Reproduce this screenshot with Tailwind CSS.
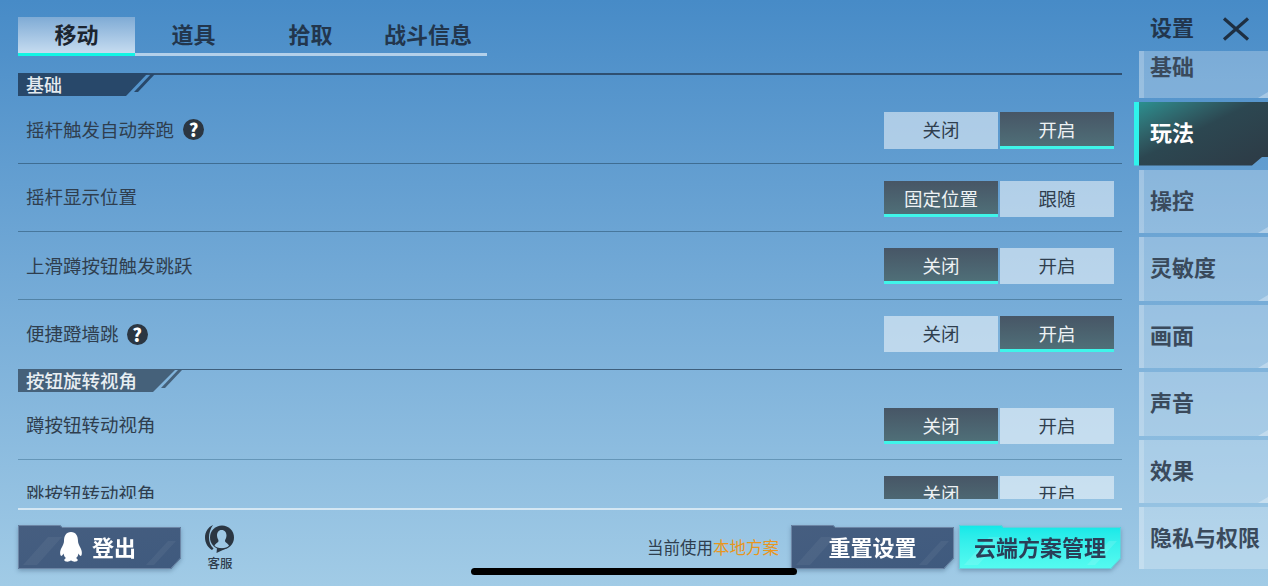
<!DOCTYPE html>
<html lang="zh">
<head>
    <meta charset="UTF-8">
    <title>设置</title>
    <script src="https://cdn.jsdelivr.net/npm/@tailwindcss/browser@4"></script>
</head>
<body class="overflow-hidden">
<div class="relative w-[1268px] h-[586px] overflow-hidden flex bg-gradient-to-b from-[#478bc7] to-[#a1cbe6] text-[#2f3e4e] font-['Noto_Sans_CJK_SC','Noto_Sans',sans-serif]">

    <!-- main column -->
    <div class="w-[1122px] pl-[18px] pt-[17px] flex flex-col">
        <!-- tabs -->
        <div class="w-[469px] h-[39px] flex border-b-[3px] border-[#b3d0ea] text-[22px] leading-[32px] font-bold text-[#22364d] text-center">
            <div class="w-[117px] h-[39px] border-b-[3px] border-[#12f5e4] bg-gradient-to-b from-[#7fabd5] to-[#c6dcf0] text-[#1c2530]">移动</div>
            <div class="w-[117px]">道具</div>
            <div class="w-[117px]">拾取</div>
            <div class="w-[118px]">战斗信息</div>
        </div>

        <!-- scrolling list -->
        <div class="mt-[17px] h-[426px] overflow-hidden">
            <div class="relative h-[23px] border-t-2 border-[#2f4f70]">
                <div class="w-[130px] h-[23px] -mt-[2px] pl-[8px] text-[18px] leading-[23px] font-medium text-[#e4ebf0] bg-[#28486a] [clip-path:polygon(0_0,100%_0,108px_100%,0_100%)]">基础</div>
                <svg class="absolute left-[115px] -top-[2px]" width="24" height="22" viewBox="0 0 24 22"><path d="M18 1 L22 1 L5 19 L1 19Z" fill="#28486a"/></svg>
            </div>

            <div class="h-[68px] px-[8px] flex items-center justify-between border-b border-[#3f6d92]">
                <div class="flex items-center gap-[9px] text-[18.5px]">摇杆触发自动奔跑<span class="w-[21px] h-[21px] rounded-full bg-[#2b3642] text-white text-[18px] leading-[21px] font-black text-center">?</span></div>
                <div class="mt-[2px] flex gap-[2px] text-[18.5px] leading-[34px] text-center">
                    <div class="w-[114px] h-[37px] bg-white/50">关闭</div>
                    <div class="w-[114px] h-[37px] border-b-[3px] border-[#3ff5ea] bg-gradient-to-b from-[#475666] to-[#4f6f78] text-[#eef2f4]">开启</div>
                </div>
            </div>
            <div class="h-[68px] px-[8px] flex items-center justify-between border-b border-[#47779c]">
                <div class="-mt-[1px] text-[18.5px]">摇杆显示位置</div>
                <div class="mt-[2px] flex gap-[2px] text-[18.5px] leading-[34px] text-center">
                    <div class="w-[114px] h-[36px] border-b-[3px] border-[#3ff5ea] bg-gradient-to-b from-[#475666] to-[#4f6f78] text-[#eef2f4]">固定位置</div>
                    <div class="w-[114px] h-[36px] bg-white/50">跟随</div>
                </div>
            </div>
            <div class="h-[68px] px-[8px] flex items-center justify-between border-b border-[#5283a6]">
                <div class="text-[18.5px]">上滑蹲按钮触发跳跃</div>
                <div class="flex gap-[2px] text-[18.5px] leading-[34px] text-center">
                    <div class="w-[114px] h-[36px] border-b-[3px] border-[#3ff5ea] bg-gradient-to-b from-[#475666] to-[#4f6f78] text-[#eef2f4]">关闭</div>
                    <div class="w-[114px] h-[36px] bg-white/50">开启</div>
                </div>
            </div>
            <div class="h-[68px] px-[8px] flex items-center justify-between">
                <div class="flex items-center gap-[8px] text-[18.5px]">便捷蹬墙跳<span class="w-[21px] h-[21px] rounded-full bg-[#2b3642] text-white text-[18px] leading-[21px] font-black text-center">?</span></div>
                <div class="flex gap-[2px] text-[18.5px] leading-[34px] text-center">
                    <div class="w-[114px] h-[36px] bg-white/50">关闭</div>
                    <div class="w-[114px] h-[36px] border-b-[3px] border-[#3ff5ea] bg-gradient-to-b from-[#475666] to-[#4f6f78] text-[#eef2f4]">开启</div>
                </div>
            </div>

            <div class="relative h-[23px] mt-px border-t border-[#3f5f7c]">
                <div class="w-[158px] h-[23px] -mt-px pl-[8px] text-[18.5px] leading-[22px] font-medium text-[#e8eef2] bg-[#45617a] [clip-path:polygon(0_0,100%_0,135px_100%,0_100%)]">按钮旋转视角</div>
                <svg class="absolute left-[142px] -top-px" width="24" height="22" viewBox="0 0 24 22"><path d="M18 1 L22 1 L5 19 L1 19Z" fill="#45617a"/></svg>
            </div>

            <div class="h-[68px] px-[8px] flex items-center justify-between border-b border-[#6596b8]">
                <div class="-mt-[2px] text-[18.5px]">蹲按钮转动视角</div>
                <div class="flex gap-[2px] text-[18.5px] leading-[34px] text-center">
                    <div class="w-[114px] h-[36px] border-b-[3px] border-[#3ff5ea] bg-gradient-to-b from-[#475666] to-[#4f6f78] text-[#eef2f4]">关闭</div>
                    <div class="w-[114px] h-[36px] bg-white/50">开启</div>
                </div>
            </div>
            <div class="h-[68px] px-[8px] flex items-center justify-between">
                <div class="-mt-[1px] text-[18.5px]">跳按钮转动视角</div>
                <div class="flex gap-[2px] text-[18.5px] leading-[34px] text-center">
                    <div class="w-[114px] h-[36px] border-b-[3px] border-[#3ff5ea] bg-gradient-to-b from-[#475666] to-[#4f6f78] text-[#eef2f4]">关闭</div>
                    <div class="w-[114px] h-[36px] bg-white/50">开启</div>
                </div>
            </div>
        </div>

        <!-- bottom bar -->
        <div class="mt-[9px] h-[2px] bg-white/60"></div>
        <div class="mt-[15px] h-[44px] flex items-center">
            <div class="drop-shadow-[0_2px_2px_rgba(40,70,100,0.35)]">
                <div class="relative w-[163px] h-[44px] pr-[3px] flex items-center justify-center gap-[10px] bg-gradient-to-br from-[#465e80] to-[#3f5a7e] text-white text-[22px] font-bold [clip-path:polygon(0_0,42px_0,44px_2px,100%_2px,100%_33px,153px_100%,0_100%)]">
                    <svg class="absolute inset-0" width="163" height="44" viewBox="0 0 163 44">
                        <path d="M5 40L30 12L44 12L19 40ZM128 40L150 16L158 16L136 40Z" fill="#fff" fill-opacity=".05"/>
                        <path d="M.5 .5H42L44 2.500H162.500V33L152.800 43.500H.5Z" fill="none" stroke="#6d86a6"/>
                    </svg>
                    <svg class="relative" width="22" height="30" viewBox="0 0 22 30"><path fill="#fff" d="M11 0C6 0 4 4 4 9C4 11 3 13 2 15C0 18-.5 22 1 24C2 24 3 22.500 3.500 21.500C4 23.500 4.500 25 6 26C4 27 3.500 29 6 29.500C8 30 10 29 11 28.500C12 29 14 30 16 29.500C18.500 29 18 27 16 26C17.500 25 18 23.500 18.500 21.500C19 22.500 20 24 21 24C22.500 22 22 18 20 15C19 13 18 11 18 9C18 4 16 0 11 0Z"/></svg>
                    <span class="relative -mt-[2px]">登出</span>
                </div>
            </div>
            <div class="ml-[24px] w-[30px] flex flex-col items-center">
                <svg width="30" height="31" viewBox="0 0 30 31">
                    <path fill="#2b3642" d="M8 1C3 3 0 8 0 13.500C0 19 3 23.500 7 26L8.500 24.500C5.500 22 4 18 4 13.500C4 9 5.500 4.500 8 1Z"/>
                    <circle cx="17" cy="13.500" r="12" fill="#2b3642"/>
                    <path fill="#9fc8e4" d="M16.500 6C13.500 6 12 8.500 12 11.500C12 14 13.500 15.500 13.500 17C13.500 18.500 10.500 19.500 9.500 21.500C12 25 21.500 25 24 21.500C23 19.500 20 18.500 20 17C20 15.500 21.500 14 21.500 11.500C21.500 8.500 20 6 16.500 6Z"/>
                    <path fill="#2b3642" d="M12 24L20 25L11.500 29Z"/>
                </svg>
                <span class="text-[12.5px] leading-[14px] mt-px font-medium whitespace-nowrap">客服</span>
            </div>
            <div class="ml-auto text-[16.5px] mr-[12px]">当前使用<span class="text-[#e8961e]">本地方案</span></div>
            <div class="drop-shadow-[0_2px_2px_rgba(40,70,100,0.35)]">
                <div class="relative w-[163px] h-[44px] pb-[2px] flex items-center justify-center bg-gradient-to-br from-[#465e80] to-[#3f5a7e] text-white text-[22px] font-bold [clip-path:polygon(0_0,42px_0,44px_2px,100%_2px,100%_33px,153px_100%,0_100%)]">
                    <svg class="absolute inset-0" width="163" height="44" viewBox="0 0 163 44">
                        <path d="M5 40L30 12L44 12L19 40ZM128 40L150 16L158 16L136 40Z" fill="#fff" fill-opacity=".05"/>
                        <path d="M.5 .5H42L44 2.500H162.500V33L152.800 43.500H.5Z" fill="none" stroke="#6d86a6"/>
                    </svg>
                    <span class="relative">重置设置</span>
                </div>
            </div>
            <div class="ml-[5px] mr-px drop-shadow-[0_2px_2px_rgba(40,70,100,0.35)]">
                <div class="relative w-[162px] h-[44px] pb-[2px] flex items-center justify-center bg-gradient-to-b from-[#0ee8e8] to-[#55fbf0] text-[#2a3f58] text-[22px] font-bold [clip-path:polygon(0_0,42px_0,44px_2px,100%_2px,100%_33px,152px_100%,0_100%)]">
                    <svg class="absolute inset-0" width="162" height="44" viewBox="0 0 162 44">
                        <path d="M5 40L30 12L44 12L19 40ZM128 40L150 16L158 16L136 40Z" fill="#fff" fill-opacity=".12"/>
                        <path d="M.5 .5H42L44 2.500H161.500V33L151.800 43.500H.5Z" fill="none" stroke="#62cfdc"/>
                    </svg>
                    <span class="relative">云端方案管理</span>
                </div>
            </div>
        </div>
    </div>

    <!-- right menu -->
    <div class="w-[146px] flex flex-col">
        <div class="h-[51px] pl-[28px] pt-[14px] flex items-start text-[22px] leading-[24px] font-bold text-[#22364d]">
            <span>设置</span>
            <svg class="ml-[28px] mt-[3px]" width="28" height="24" viewBox="0 0 28 24"><path d="M2 1.500L26 22.500M26 1.500L2 22.500" stroke="#1e2f42" stroke-width="3.200" fill="none"/></svg>
        </div>
        <div class="h-[518px] overflow-hidden flex flex-col gap-[4px] text-[22px] font-bold text-[#3a4a5c]">
            <div class="relative shrink-0 -mt-[16.500px] ml-[17px] h-[63.500px] pl-[6px] leading-[60px] bg-white/25 border-l-[5px] border-white/20">基础
                <svg class="absolute right-0 bottom-0" width="10" height="6" viewBox="0 0 10 6"><path d="M10 0V6H0Z" fill="#fff" fill-opacity=".3"/></svg>
            </div>
            <div class="relative shrink-0 ml-[12px] h-[63.500px] pl-[11px] leading-[59px] border-l-[5px] border-[#2ff3ec] text-white bg-gradient-to-br from-[#2a9090] via-[#2c4751] via-45% to-[#2d3a45] [clip-path:polygon(0_0,100%_0,100%_55px,128px_55px,118px_100%,0_100%)]">玩法</div>
            <div class="relative shrink-0 ml-[17px] h-[63.500px] pl-[6px] leading-[58px] bg-white/25 border-l-[5px] border-white/20">操控
                <svg class="absolute right-0 bottom-0" width="10" height="6" viewBox="0 0 10 6"><path d="M10 0V6H0Z" fill="#fff" fill-opacity=".3"/></svg>
            </div>
            <div class="relative shrink-0 ml-[17px] h-[63.500px] pl-[6px] leading-[58px] bg-white/25 border-l-[5px] border-white/20">灵敏度
                <svg class="absolute right-0 bottom-0" width="10" height="6" viewBox="0 0 10 6"><path d="M10 0V6H0Z" fill="#fff" fill-opacity=".3"/></svg>
            </div>
            <div class="relative shrink-0 ml-[17px] h-[63.500px] pl-[6px] leading-[58px] bg-white/25 border-l-[5px] border-white/20">画面
                <svg class="absolute right-0 bottom-0" width="10" height="6" viewBox="0 0 10 6"><path d="M10 0V6H0Z" fill="#fff" fill-opacity=".3"/></svg>
            </div>
            <div class="relative shrink-0 ml-[17px] h-[63.500px] pl-[6px] leading-[58px] bg-white/25 border-l-[5px] border-white/20">声音
                <svg class="absolute right-0 bottom-0" width="10" height="6" viewBox="0 0 10 6"><path d="M10 0V6H0Z" fill="#fff" fill-opacity=".3"/></svg>
            </div>
            <div class="relative shrink-0 ml-[17px] h-[63.500px] pl-[6px] leading-[58px] bg-white/25 border-l-[5px] border-white/20">效果
                <svg class="absolute right-0 bottom-0" width="10" height="6" viewBox="0 0 10 6"><path d="M10 0V6H0Z" fill="#fff" fill-opacity=".3"/></svg>
            </div>
            <div class="relative shrink-0 ml-[17px] h-[63.500px] pl-[6px] leading-[58px] bg-white/25 border-l-[5px] border-white/20 whitespace-nowrap">隐私与权限</div>
        </div>
    </div>

    <!-- home indicator -->
    <div class="absolute left-[471px] top-[568px] w-[326px] h-[7px] rounded-full bg-black"></div>
</div>
</body>
</html>
